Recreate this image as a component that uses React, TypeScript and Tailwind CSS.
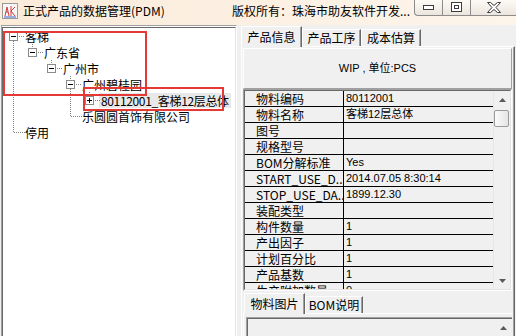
import React from 'react';

const CJK = "font-['Noto_Sans_CJK_SC',sans-serif]";
const LATIN = "font-['Liberation_Sans','Noto_Sans_CJK_SC',sans-serif]";

type TreeNode = { label: string; level: number; box?: 'minus' | 'plus'; selected?: boolean };

const treeRows: TreeNode[] = [
  { label: '客梯', level: 0, box: 'minus' },
  { label: '广东省', level: 1, box: 'minus' },
  { label: '广州市', level: 2, box: 'minus' },
  { label: '广州碧桂园', level: 3, box: 'minus' },
  { label: '80112001_客梯12层总体', level: 4, box: 'plus', selected: true },
  { label: '乐圆圆首饰有限公司', level: 3 },
  { label: '停用', level: 0 },
];

const indent = ['pl-[6px]', 'pl-[25px]', 'pl-[44px]', 'pl-[63px]', 'pl-[82px]'];

const props: [string, string][] = [
  ['物料编码', '80112001'],
  ['物料名称', '客梯12层总体'],
  ['图号', ''],
  ['规格型号', ''],
  ['BOM分解标准', 'Yes'],
  ['START_USE_D...', '2014.07.05 8:30:14'],
  ['STOP_USE_DA...', '1899.12.30'],
  ['装配类型', ''],
  ['构件数量', '1'],
  ['产出因子', '1'],
  ['计划百分比', '1'],
  ['产品基数', '1'],
  ['生产附加数量', '0'],
];

function AppIcon() {
  return (
    <svg width="16" height="16" viewBox="0 0 16 16" className="ml-[2px] mr-[5px] shrink-0">
      <rect x="0.5" y="0.5" width="15" height="15" fill="#f7f7f7" stroke="#9a9a9a" />
      <path d="M3 13 L5 4 L7 13 M4 9 H6" stroke="#d23a3a" strokeWidth="1" fill="none" />
      <path d="M9 3 V13 M9 8 L13 4 M9 8 L13 13" stroke="#d23a3a" strokeWidth="1" fill="none" />
      <path d="M2 14 H14" stroke="#3a62c4" strokeWidth="1" />
    </svg>
  );
}

function WinButtons() {
  return (
    <div className="ml-auto flex h-[16px] border-l border-b border-[#8b8b8b] rounded-bl-[4px] bg-gradient-to-b from-[#fdfaf6] to-[#ebe5de]">
      <div className="w-[28px] border-r border-[#8b8b8b] flex items-center justify-center">
        <svg width="12" height="6" viewBox="0 0 12 6">
          <rect x="0.5" y="0.5" width="10" height="4" fill="#fff" stroke="#3c3c3c" />
        </svg>
      </div>
      <div className="w-[28px] border-r border-[#8b8b8b] flex items-center justify-center">
        <svg width="12" height="11" viewBox="0 0 12 11">
          <rect x="0.5" y="0.5" width="10" height="9" fill="#fff" stroke="#3c3c3c" />
          <rect x="3.5" y="3.5" width="4" height="3" fill="#fff" stroke="#3c3c3c" />
        </svg>
      </div>
      <div className="w-[45px] flex items-center justify-center">
        <svg width="14" height="11" viewBox="0 0 14 11">
          <path
            d="M0.5 0.5 H3.5 L7 3.5 L10.5 0.5 H13.5 L9 5.5 L13.5 10.5 H10.5 L7 7.5 L3.5 10.5 H0.5 L5 5.5 Z"
            fill="#fff"
            stroke="#3c3c3c"
          />
        </svg>
      </div>
    </div>
  );
}

function TitleBar() {
  return (
    <div className="h-[25px] shrink-0 flex items-start bg-gradient-to-r from-[#fbebd9] via-[#fcf0e3] to-[#fdf4ea]">
      <div className="w-[232px] h-[22px] flex items-center">
        <AppIcon />
        <span className="text-[12px] leading-none">正式产品的数据管理(PDM)</span>
      </div>
      <div className="h-[22px] flex items-center text-[12px] leading-none">版权所有：珠海市助友软件开发...</div>
      <WinButtons />
    </div>
  );
}

function ExpandBox({ kind }: { kind: 'minus' | 'plus' }) {
  return (
    <svg width="9" height="9" viewBox="0 0 9 9" className="shrink-0">
      <rect x="0.5" y="0.5" width="8" height="8" fill="#fff" stroke="#8a8a8a" />
      <path d="M2 4.5 H7" stroke="#000" />
      {kind === 'plus' && <path d="M4.5 2 V7" stroke="#000" />}
    </svg>
  );
}

function TreeLines() {
  // dotted connectors, in tree content coordinates (rows 16px, box centre x = 10 + 19 * level)
  const v: [number, number, number][] = [
    [10, 13, 104],
    [29, 16, 20],
    [48, 32, 36],
    [67, 48, 52],
    [67, 61, 88],
    [86, 64, 68],
  ];
  const h: [number, number, number][] = [
    [8, 16, 22],
    [24, 35, 41],
    [40, 54, 60],
    [56, 73, 79],
    [72, 92, 98],
    [88, 68, 79],
    [104, 11, 22],
  ];
  return (
    <svg className="absolute left-0 top-0 pointer-events-none" width="233" height="120" shapeRendering="crispEdges">
      {v.map(([x, y1, y2], i) => (
        <line key={'v' + i} x1={x + 0.5} y1={y1} x2={x + 0.5} y2={y2} stroke="#808080" strokeDasharray="1 1" />
      ))}
      {h.map(([y, x1, x2], i) => (
        <line key={'h' + i} x1={x1} y1={y + 0.5} x2={x2} y2={y + 0.5} stroke="#808080" strokeDasharray="1 1" />
      ))}
    </svg>
  );
}

function TreePanel() {
  return (
    <div className="ml-[1px] w-[236px] bg-white pt-[1px] border-t border-l border-[#a0a0a0] border-r border-r-white">
      <div className="relative h-full border-t border-l border-[#696969] border-r border-r-[#e3e3e3]">
        <TreeLines />
        {treeRows.map((n) => (
          <div key={n.label} className={`h-[16px] flex items-center ${indent[n.level]}`}>
            {n.box ? (
              <>
                <ExpandBox kind={n.box} />
                <div className="w-[7px] shrink-0" />
              </>
            ) : (
              <div className="w-[16px] shrink-0" />
            )}
            <span
              className={`text-[12px] leading-[15px] whitespace-nowrap ${
                n.selected ? 'bg-[#e8e8e8] px-[2px] -ml-[2px] tracking-[-0.35px]' : ''
              }`}
            >
              {n.label}
            </span>
          </div>
        ))}
      </div>
    </div>
  );
}

function Tab({ label, active, w }: { label: string; active?: boolean; w: string }) {
  return (
    <div
      className={`${w} ${active ? 'h-[21px] mb-[-1px] relative z-10' : 'h-[17px]'} shrink-0 bg-[#f0f0f0] border-t border-l border-white border-r border-r-[#696969] shadow-[inset_-1px_0_0_#a0a0a0] flex items-center justify-center text-[12px] leading-none`}
    >
      {label}
    </div>
  );
}

function Arrow({ up }: { up?: boolean }) {
  return (
    <svg width="7" height="4" viewBox="0 0 7 4">
      <path d={up ? 'M0 4 L3.5 0 L7 4 Z' : 'M0 0 L3.5 4 L7 0 Z'} fill="#5a5a5a" />
    </svg>
  );
}

function VScroll() {
  return (
    <div className="w-[17px] shrink-0 flex flex-col bg-[#f0f0f0] border-l border-[#e6e6e6]">
      <div className="h-[17px] flex items-center justify-center">
        <Arrow up />
      </div>
      <div className="mt-[2px] h-[17px] w-[15px] rounded-[2px] border border-[#9a9a9a] bg-gradient-to-r from-[#fbfbfb] to-[#e4e4e4]" />
      <div className="flex-1" />
      <div className="h-[17px] flex items-center justify-center">
        <Arrow />
      </div>
    </div>
  );
}

function PropGrid() {
  return (
    <div className="ml-[1px] w-[269px] h-[202px] shrink-0 flex border-t border-l border-[#a0a0a0] border-r border-b border-r-white border-b-white">
      <div className="flex-1 flex overflow-hidden border-t border-l border-[#696969] border-r border-b border-r-[#e3e3e3] border-b-[#e3e3e3]">
        <div className="w-[248px] shrink-0 overflow-hidden">
          {props.map(([k, val]) => (
            <div key={k} className="h-[16px] flex border-b border-black">
              <div className="w-[99px] shrink-0 border-r border-black pl-[11px] text-[12px] leading-[15px] whitespace-nowrap overflow-hidden">
                {k}
              </div>
              <div className={`flex-1 pl-[2px] text-[11px] leading-[15px] whitespace-nowrap ${LATIN}`}>{val}</div>
            </div>
          ))}
        </div>
        <VScroll />
      </div>
    </div>
  );
}

function RightPanel() {
  return (
    <div className="flex-1 min-w-0 flex flex-col pr-[1px]">
      <div className="h-[21px] shrink-0 flex items-end">
        <Tab active w="w-[61px]" label="产品信息" />
        <Tab w="w-[59px]" label="产品工序" />
        <Tab w="w-[60px]" label="成本估算" />
      </div>
      <div className="flex-1 min-h-0 flex flex-col border-t border-l border-white border-r border-r-[#696969] shadow-[inset_-1px_0_0_#a0a0a0]">
        <div className="ml-[1px] mt-[1px] w-[269px] h-[41px] shrink-0 flex items-center justify-center border-t border-l border-white border-r border-b border-r-[#a0a0a0] border-b-[#a0a0a0]">
          <span className={`text-[11px] leading-none ${LATIN}`}>WIP , 单位:PCS</span>
        </div>
        <PropGrid />
        <div className="ml-[1px] w-[270px] flex-1 flex flex-col">
          <div className="h-[22px] shrink-0 flex items-end pl-[1px]">
            <Tab active w="w-[61px]" label="物料图片" />
            <Tab w="w-[58px]" label="BOM说明" />
          </div>
          <div className="flex-1 border-t border-l border-white">
            <div className="ml-[2px] mt-[3px] w-[266px] h-[40px] border-t border-l border-[#a0a0a0]">
              <div className="h-full flex border-t border-l border-[#696969]">
                <div className="flex-1 bg-[#f0f0f0]" />
                <div className="w-[17px] h-[17px] flex items-center justify-center">
                  <Arrow up />
                </div>
              </div>
            </div>
          </div>
        </div>
      </div>
    </div>
  );
}

export default function App() {
  return (
    <div className={`relative w-[516px] h-[336px] overflow-hidden bg-[#f0f0f0] flex flex-col text-black ${CJK}`}>
      <TitleBar />
      <div className="flex flex-1 min-h-0">
        <TreePanel />
        <div className="w-[4px] shrink-0" />
        <RightPanel />
      </div>
      {/* red marks drawn over the screenshot */}
      <div className="absolute left-[3px] top-[31px] w-[144px] h-[65px] border-2 border-[#e53935]" />
      <div className="absolute left-[83px] top-[87px] w-[141px] h-[24px] border-2 border-[#e53935]" />
    </div>
  );
}
